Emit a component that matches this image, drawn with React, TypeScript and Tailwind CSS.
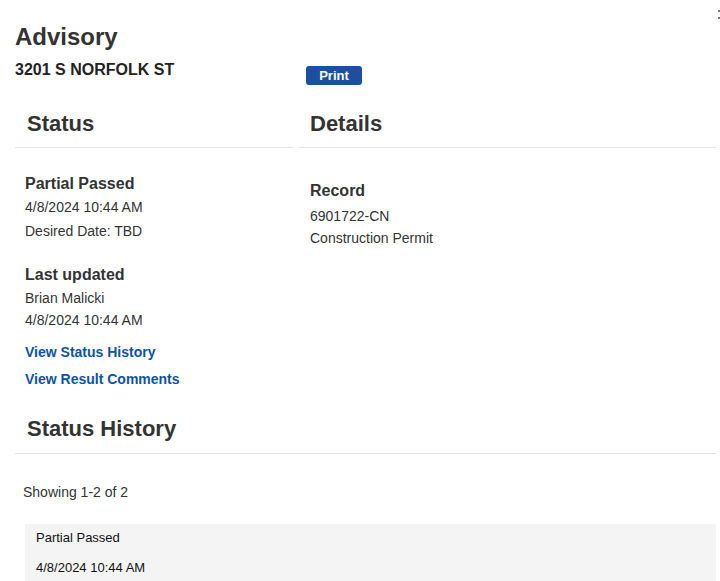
import React from 'react';

const font = { fontFamily: '"Liberation Sans", Arial, sans-serif' };

const SectionHeader = ({
  title,
  className = '',
  tight = false,
}: {
  title: string;
  className?: string;
  tight?: boolean;
}) => (
  <div className={`border-b border-[#e3e3e3] ${tight ? 'pb-[10px]' : 'pb-[11px]'} ${className}`}>
    <h2 className="text-[22px] leading-[26px] font-bold text-[#333]">{title}</h2>
  </div>
);

const history = [{ status: 'Partial Passed', date: '4/8/2024 10:44 AM' }];

export default function App() {
  return (
    <div style={font} className="relative min-h-[581px] bg-white pl-[15px] pr-[4px] pt-[23px] text-[#333]">
      {/* scroll hint dots */}
      <div className="absolute right-0 top-[10px] flex flex-col gap-[5px]">
        <span className="block h-[2px] w-[2px] bg-[#777]"></span>
        <span className="block h-[2px] w-[2px] bg-[#777]"></span>
      </div>

      <h1 className="text-[24px] leading-[28px] font-bold text-[#333]">Advisory</h1>

      <div className="mt-[9px] grid grid-cols-[278px_1fr] gap-x-[6px]">
        <div className="text-[16px] leading-[20px] font-bold text-[#222]">3201 S NORFOLK ST</div>
        <div>
          <button className="ml-[7px] mt-[6px] h-[19px] w-[56px] rounded-[3px] bg-[#1d4f9f] text-[13px] leading-[19px] font-bold text-white">
            Print
          </button>
        </div>
      </div>

      <div className="mt-[24px] grid grid-cols-[278px_1fr] gap-x-[6px]">
        {/* Status column */}
        <div>
          <SectionHeader title="Status" className="pl-[12px]" tight />
          <div className="pl-[10px] pt-[26px]">
            <div className="text-[16px] leading-[20px] font-bold">Partial Passed</div>
            <div className="mt-[1px] text-[14px] leading-[24px]">4/8/2024 10:44 AM</div>
            <div className="text-[14px] leading-[24px]">Desired Date: TBD</div>

            <div className="mt-[22px] text-[16px] leading-[20px] font-bold">Last updated</div>
            <div className="mt-[2px] text-[14px] leading-[22px]">Brian Malicki</div>
            <div className="text-[14px] leading-[22px]">4/8/2024 10:44 AM</div>

            <a href="#" className="mt-[11px] block text-[14px] leading-[20px] font-bold text-[#0b53a5]">
              View Status History
            </a>
            <a href="#" className="mt-[7px] block text-[14px] leading-[20px] font-bold text-[#0b53a5]">
              View Result Comments
            </a>
          </div>
        </div>

        {/* Details column */}
        <div>
          <SectionHeader title="Details" className="pl-[11px]" tight />
          <div className="pl-[11px] pt-[33px]">
            <div className="text-[16px] leading-[20px] font-bold">Record</div>
            <div className="mt-[4px] text-[14px] leading-[22px]">6901722-CN</div>
            <div className="text-[14px] leading-[22px]">Construction Permit</div>
          </div>
        </div>
      </div>

      <SectionHeader title="Status History" className="mt-[27px] pl-[12px]" />

      <div className="pl-[8px] pt-[28px] text-[14px] leading-[20px]">Showing 1-2 of 2</div>

      <div className="mt-[22px] ml-[10px] flex flex-col gap-[1px]">
        {history.map((h) => (
          <div key={h.date} className="bg-[#f4f4f4] px-[11px] pt-[4px] pb-[14px] text-[13px] leading-[20px] text-[#111]">
            <div>{h.status}</div>
            <div className="mt-[10px]">{h.date}</div>
          </div>
        ))}
      </div>
    </div>
  );
}
